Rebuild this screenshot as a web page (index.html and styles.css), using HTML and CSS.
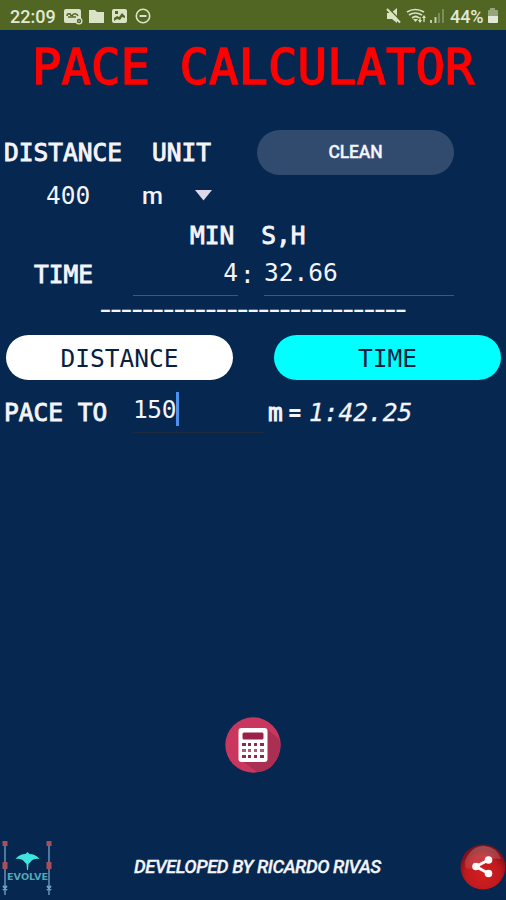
FILE: index.html
```
<!DOCTYPE html>
<html lang="en">
<head>
    <meta charset="UTF-8">
    <meta name="viewport" content="width=device-width, initial-scale=1.0">
    <title>Pace Calculator</title>
    <link rel="stylesheet" href="styles.css">
</head>
<body>
    <div class="app">
        <div class="status-bar">
            <span class="clock">22:09</span>
            <svg class="status-left" width="90" height="18" viewBox="0 0 90 18">
                <g fill="#dbe3c6">
                    <rect x="1" y="1" width="17" height="14" rx="2"/>
                    <path d="M26 2h6l2 2h7v11H26z"/>
                    <rect x="49" y="1" width="15" height="14" rx="2"/>
                    <circle cx="16" cy="13" r="3.5"/>
                </g>
                <g fill="none" stroke="#526624" stroke-width="1.4">
                    <path d="M4 8c0-3 4-3 4 0M9 8c1-3 5-3 6 0M5 9h8"/>
                    <circle cx="16" cy="13" r="1.5"/>
                </g>
                <path d="M51 13v-3l3-2 2 1 3-4 3 3v2l-3-1-2 3-3-1zM52 3h3v3h-3z" fill="#526624"/>
                <circle cx="80" cy="8" r="6.7" fill="none" stroke="#dbe3c6" stroke-width="1.6"/>
                <path d="M76.5 8h7" stroke="#dbe3c6" stroke-width="2"/>
            </svg>
            <svg class="status-right" width="60" height="18" viewBox="0 0 60 18">
                <path d="M1 5h4l6-5v15l-5-4H1z" fill="#dbe3c6"/>
                <path d="M2 0l13 13" stroke="#526624" stroke-width="1.5"/>
                <path d="M1 1l13 13.500" stroke="#dbe3c6" stroke-width="2"/>
                <g fill="none" stroke="#dbe3c6" stroke-width="1.7">
                    <path d="M21 4q8-5 17 0M23 7q6-4 13 0M26 10q4-3 7 0"/>
                    <path d="M34 9v5M38 9v5" stroke-width="1.3"/>
                </g>
                <path d="M27 11h5l-2.500 3z" fill="#dbe3c6"/>
                <path d="M32 12h4l-2 3zM36 10h4l-2-3z" fill="#dbe3c6"/>
                <path d="M45 12v3M49.500 9v6" stroke="#c3cda6" stroke-width="2"/>
                <path d="M53 5v10M57 1v14" stroke="#87956a" stroke-width="1.6"/>
            </svg>
            <span class="battery-level">44%</span>
            <svg class="battery" width="12" height="16" viewBox="0 0 12 16">
                <path d="M3 0h5v2h2q1 0 1 1v5H1V3q0-1 1-1h1z" fill="#98a57a"/>
                <path d="M1 8h10v6q0 1-1 1H2q-1 0-1-1z" fill="#e3e9d5"/>
            </svg>
        </div>

        <h1 class="title">PACE CALCULATOR</h1>

        <div class="row head-row">
            <span class="label">DISTANCE</span>
            <span class="label">UNIT</span>
            <button class="btn clean">CLEAN</button>
        </div>
        <div class="row distance-row">
            <span class="value">400</span>
            <span class="unit">m</span>
            <svg width="17" height="11" viewBox="0 0 17 11"><path d="M0 0h17L8.500 10.500z" fill="#ddd9ea"/></svg>
        </div>
        <div class="row time-head">
            <span class="label">MIN</span>
            <span class="label">S,H</span>
        </div>
        <div class="row time-row">
            <span class="label">TIME</span>
            <span class="field minutes">4</span>
            <span class="colon">:</span>
            <span class="field seconds">32.66</span>
        </div>
        <div class="divider">_____________________________</div>

        <div class="row modes">
            <button class="btn distance">DISTANCE</button>
            <button class="btn time">TIME</button>
        </div>
        <div class="row pace-row">
            <span class="label">PACE TO</span>
            <span class="pace-field">150<span class="caret"></span></span>
            <span class="pace-unit">m</span>
            <span class="equals">=</span>
            <span class="result">1:42.25</span>
        </div>

        <div class="calculate">
            <svg width="56" height="56" viewBox="0 0 56 56">
                <circle cx="28" cy="28" r="27.700" fill="#c9375f"/>
                <path d="M42 12l12 10q4 16-8 28-6 5-14 5L16 43z" fill="#ab2e53"/>
                <rect x="13.500" y="11" width="29" height="34" rx="3" fill="#fff"/>
                <rect x="17.500" y="15.500" width="21" height="7" rx="1.500" fill="#9c2149"/>
                <g fill="#8d2949">
                    <path d="M17 26h4v3h-4zM23 26h3v3h-3zM29 26h3v3h-3zM35 26h4v3h-4z"/>
                    <path d="M17 32h4v3h-4zM23 32h3v3h-3zM29 32h3v3h-3zM35 32h4v3h-4z" opacity=".75"/>
                    <path d="M17 38h4v3h-4zM23 38h3v3h-3zM29 38h3v3h-3zM35 38h4v3h-4z"/>
                </g>
            </svg>
        </div>

        <div class="footer">
            <svg width="54" height="60" viewBox="0 0 54 60">
                <path d="M5 1v54M49 1v54" stroke="#7199bd" stroke-width="1.400"/>
                <g fill="#a94f5b">
                    <path d="M2.500 1h5v5h-5zM2.500 22h5v7h-5zM46.500 1h5v5h-5zM46.500 22h5v7h-5z"/>
                </g>
                <path d="M3 46l4 4m0-4l-4 4M47 46l4 4m0-4l-4 4" stroke="#6fa5cc" stroke-width="1.800"/>
                <path d="M15.500 19q4-5 10-5l2-2 2 2q6 0 10 5-6-1-9 3l-2 2-.5 6h-1l-.5-6-2-2q-3-4-9-3z" fill="#3fe4de"/>
                <text class="logo-text" x="7" y="40" textLength="41" lengthAdjust="spacingAndGlyphs">EVOLVE</text>
            </svg>
            <span class="credit">DEVELOPED BY RICARDO RIVAS</span>
            <svg width="46" height="46" viewBox="0 0 46 46">
                <defs>
                    <radialGradient id="share-red" cx=".5" cy=".65" r=".55">
                        <stop offset="0" stop-color="#d51e20"/>
                        <stop offset=".7" stop-color="#bd1a1e"/>
                        <stop offset="1" stop-color="#861018"/>
                    </radialGradient>
                    <linearGradient id="share-shine" x2="0" y2="1">
                        <stop offset="0" stop-color="#fff" stop-opacity=".25"/>
                        <stop offset="1" stop-color="#fff" stop-opacity=".08"/>
                    </linearGradient>
                </defs>
                <circle cx="23" cy="23" r="22.500" fill="url(#share-red)"/>
                <path d="M5 17Q11 2 24 2q13 1 17 13-12-2-19 4T7 25q-3-3-2-8z" fill="url(#share-shine)"/>
                <path d="M28.500 16L16 22.500l12.500 7" fill="none" stroke="#fff" stroke-width="3"/>
                <g fill="#fff">
                    <circle cx="28.500" cy="16" r="3.800"/>
                    <circle cx="16" cy="22.500" r="3.800"/>
                    <circle cx="28.500" cy="29.500" r="3.800"/>
                </g>
            </svg>
        </div>
    </div>
</body>
</html>
```
FILE: styles.css
```
* {
    box-sizing: border-box;
}

body {
    margin: 0;
    background: #06274f;
    color: #f4f4fa;
    font-family: "DejaVu Sans Mono", monospace;
    overflow: hidden;
}

.app {
    width: 506px;
    height: 900px;
    display: flex;
    flex-direction: column;
}

.status-bar {
    display: flex;
    align-items: center;
    height: 30px;
    padding: 2px 7px 0 10px;
    background: #526624;
    color: #e3e9d5;
    font-family: Roboto, sans-serif;
    font-size: 18px;
    font-weight: 500;
}

.clock {
    width: 53px;
}

.status-left,
.status-right {
    margin-top: 1px;
}

.status-right {
    margin-left: auto;
    margin-right: 4px;
}

.battery-level {
    width: 36px;
    letter-spacing: -0.1px;
}

.battery {
    margin-left: 1px;
}

.title {
    height: 100px;
    margin: 0;
    padding-left: 32px;
    color: #ff0000;
    font-size: 49px;
    font-weight: normal;
    line-height: 76px;
    white-space: nowrap;
    -webkit-text-stroke: 1.4px #ff0000;
}

.row {
    display: flex;
    white-space: nowrap;
}

.label {
    font-size: 24.5px;
    -webkit-text-stroke: 0.9px #f4f4fa;
}

.btn {
    border: none;
    border-radius: 23px;
    height: 45px;
    padding: 0;
    font-family: "DejaVu Sans Mono", monospace;
    font-size: 24.5px;
}

.head-row {
    align-items: center;
    height: 44px;
    padding-left: 4px;
}

.head-row .label {
    width: 148px;
}

.head-row .label + .label {
    width: 105px;
}

.clean {
    width: 197px;
    background: #304b6e;
    color: #f4f4fa;
    font-family: Roboto, sans-serif;
    font-size: 17.5px;
    font-weight: 500;
    letter-spacing: -0.2px;
    -webkit-text-stroke: 0.3px #f4f4fa;
}

.distance-row {
    align-items: center;
    height: 43px;
    padding-left: 46px;
}

.value {
    width: 96px;
    font-size: 24.5px;
}

.unit {
    width: 53px;
    font-family: Roboto, sans-serif;
    font-size: 24px;
    font-weight: 500;
}

.time-head {
    align-items: center;
    gap: 27px;
    height: 36px;
    padding-left: 190px;
}

.time-row {
    height: 43px;
    padding-left: 34px;
    line-height: 43px;
}

.time-row .label {
    width: 99px;
}

.field {
    height: 43px;
    border-bottom: 1.5px solid #405a73;
    font-size: 24.5px;
    line-height: 39px;
}

.minutes {
    width: 105px;
    text-align: right;
}

.colon {
    width: 19px;
    margin-right: 7px;
    text-align: center;
    font-size: 24.5px;
}

.seconds {
    width: 190px;
}

.divider {
    height: 39px;
    padding-left: 101px;
    font-family: Roboto, sans-serif;
    font-size: 20px;
    font-weight: 700;
    letter-spacing: 1.66px;
    line-height: 14px;
}

.modes {
    justify-content: space-between;
    padding: 0 5px 0 6px;
}

.modes .btn {
    width: 227px;
    padding-top: 2px;
}

.distance {
    background: #fff;
    color: #08203f;
}

.time {
    background: #00ffff;
    color: #08203f;
}

.pace-row {
    height: 53px;
    padding-left: 4px;
    line-height: 65px;
}

.pace-row .label {
    width: 129px;
}

.pace-field {
    display: flex;
    align-items: center;
    width: 131px;
    height: 53px;
    padding-top: 6px;
    border-bottom: 1px solid #202a38;
    font-size: 24.5px;
    letter-spacing: -0.4px;
}

.caret {
    width: 3px;
    height: 34px;
    background: #4a92ee;
}

.pace-unit {
    margin-left: 4px;
    font-size: 24.5px;
    -webkit-text-stroke: 1px #f4f4fa;
}

.equals {
    margin-left: 5px;
    font-family: Roboto, sans-serif;
    font-size: 25px;
    font-weight: 700;
}

.result {
    margin-left: 7px;
    font-size: 24.5px;
    font-style: italic;
    -webkit-text-stroke: 0.3px #f4f4fa;
}

.calculate {
    display: flex;
    justify-content: center;
    margin-top: 284px;
}

.footer {
    display: flex;
    align-items: center;
    height: 60px;
    margin-top: auto;
}

.credit {
    flex: 1;
    padding: 0 0 6px 80px;
    font-family: Roboto, sans-serif;
    font-size: 18.5px;
    font-style: italic;
    font-weight: 500;
    letter-spacing: -0.48px;
    white-space: nowrap;
    -webkit-text-stroke: 0.3px #f4f4fa;
}

.footer svg:last-child {
    margin-top: -7px;
}

.logo-text {
    fill: #52a6b8;
    font-family: "DejaVu Sans", sans-serif;
    font-size: 9px;
    font-weight: bold;
}
```
